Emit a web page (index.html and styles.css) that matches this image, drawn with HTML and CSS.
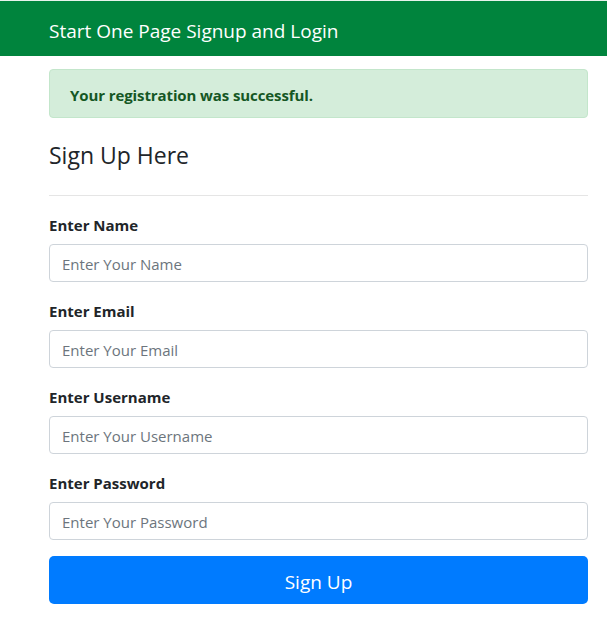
FILE: index.html
```html
<!DOCTYPE html>
<html lang="en">

<head>
  <meta charset="UTF-8">
  <meta name="viewport" content="width=device-width, initial-scale=1.0">
  <title>Start One Page Signup and Login</title>
  <link rel="stylesheet" href="styles.css">
</head>

<body>
  <header class="topbar">Start One Page Signup and Login</header>
  <div class="container">
    <div class="alert">Your registration was successful.</div>
    <h3>Sign Up Here</h3>
    <hr>
    <form>
      <div class="input-group">
        <label>Enter Name</label>
        <input type="text" placeholder="Enter Your Name">
      </div>
      <div class="input-group">
        <label>Enter Email</label>
        <input type="email" placeholder="Enter Your Email">
      </div>
      <div class="input-group">
        <label>Enter Username</label>
        <input type="text" placeholder="Enter Your Username">
      </div>
      <div class="input-group">
        <label>Enter Password</label>
        <input type="password" placeholder="Enter Your Password">
      </div>
      <button type="button">Sign Up</button>
    </form>
  </div>
</body>

</html>
```

FILE: styles.css
```css
* {
  margin: 0;
  padding: 0;
  box-sizing: border-box;
  font-family: 'Open Sans', sans-serif;
}

body {
  background: #fff;
  color: #212529;
}

.topbar {
  background: #00843d;
  color: #fff;
  height: 56px;
  line-height: 56px;
  padding: 2px 0 0 49px;
  font-size: 19px;
  border-top: 1px solid #e8f3ec;
}

.container {
  padding: 0 19px 0 49px;
}

.alert {
  margin-top: 13px;
  height: 49px;
  line-height: 47px;
  padding: 2px 20px 0;
  background: #d4edda;
  border: 1px solid #c3e6cb;
  border-radius: 4px;
  color: #155724;
  font-weight: bold;
  font-size: 15px;
  letter-spacing: -0.1px;
}

h3 {
  margin-top: 23px;
  font-size: 23px;
  font-weight: normal;
  line-height: 29px;
}

hr {
  margin-top: 25px;
  border: 0;
  border-top: 1px solid rgba(0, 0, 0, .1);
}

form {
  display: flex;
  flex-direction: column;
  margin-top: 18px;
}

.input-group {
  display: flex;
  flex-direction: column;
  gap: 8px;
  margin-bottom: 18px;
}

.input-group label {
  font-size: 15px;
  font-weight: bold;
  line-height: 22px;
}

.input-group input {
  height: 38px;
  padding: 1px 12px 0;
  font-size: 15px;
  border: 1px solid #ced4da;
  border-radius: 4px;
  outline: none;
  color: #495057;
}

.input-group input::placeholder {
  color: #6c757d;
}

button {
  margin-top: -2px;
  height: 48px;
  padding-top: 3px;
  background: #007bff;
  color: #fff;
  border: 0;
  border-radius: 5px;
  font-size: 19px;
  cursor: pointer;
}
```
